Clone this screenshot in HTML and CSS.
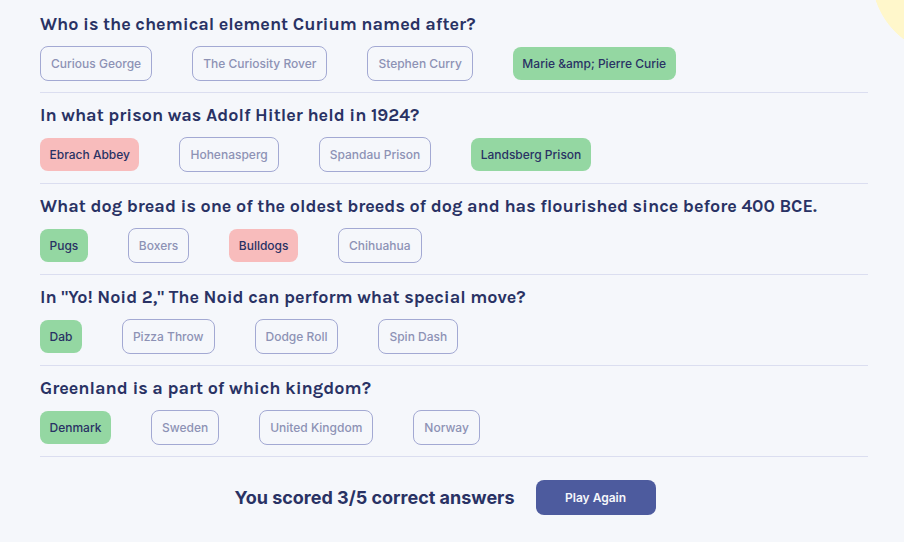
FILE: index.html
```html
<!DOCTYPE html>
<html>
<head>
<meta charset="utf-8">
<link rel="stylesheet" href="styles.css">
</head>
<body>
<main class="quiz">
  <section class="item">
    <h2 class="question">Who is the chemical element Curium named after?</h2>
    <div class="answers">
      <span class="answer">Curious George</span>
      <span class="answer">The Curiosity Rover</span>
      <span class="answer">Stephen Curry</span>
      <span class="answer correct">Marie &amp;amp; Pierre Curie</span>
    </div>
  </section>
  <section class="item">
    <h2 class="question">In what prison was Adolf Hitler held in 1924?</h2>
    <div class="answers">
      <span class="answer wrong">Ebrach Abbey</span>
      <span class="answer">Hohenasperg</span>
      <span class="answer">Spandau Prison</span>
      <span class="answer correct">Landsberg Prison</span>
    </div>
  </section>
  <section class="item">
    <h2 class="question">What dog bread is one of the oldest breeds of dog and has flourished since before 400 BCE.</h2>
    <div class="answers">
      <span class="answer correct">Pugs</span>
      <span class="answer">Boxers</span>
      <span class="answer wrong">Bulldogs</span>
      <span class="answer">Chihuahua</span>
    </div>
  </section>
  <section class="item">
    <h2 class="question">In "Yo! Noid 2," The Noid can perform what special move?</h2>
    <div class="answers">
      <span class="answer correct">Dab</span>
      <span class="answer">Pizza Throw</span>
      <span class="answer">Dodge Roll</span>
      <span class="answer">Spin Dash</span>
    </div>
  </section>
  <section class="item">
    <h2 class="question">Greenland is a part of which kingdom?</h2>
    <div class="answers">
      <span class="answer correct">Denmark</span>
      <span class="answer">Sweden</span>
      <span class="answer">United Kingdom</span>
      <span class="answer">Norway</span>
    </div>
  </section>
  <div class="result">
    <p class="score">You scored 3/5 correct answers</p>
    <button class="play">Play Again</button>
  </div>
</main>
</body>
</html>
```
FILE: styles.css
```css
html, body {
  margin: 0;
  padding: 0;
  background: #f5f7fb;
  overflow: hidden;
}
body {
  width: 904px;
  height: 542px;
  font-family: Inter, "Liberation Sans", sans-serif;
  color: #293264;
  background: radial-gradient(circle at 952px -25px, #fff7cb 80px, rgba(245, 247, 251, 0) 80.7px), #f5f7fb;
}
.quiz {
  margin: 0 36px 0 40px;
  padding-top: 2px;
}
.item {
  padding: 12px 0 11px;
  border-bottom: 1px solid #dbdef0;
}
.question {
  margin: 0 0 12px;
  font-family: Karla, Inter, sans-serif;
  font-size: 18px;
  line-height: 20px;
  font-weight: 700;
  color: #293264;
}
.answers {
  display: flex;
  align-items: center;
  gap: 40px;
  height: 35px;
}
.answer {
  font-size: 12px;
  line-height: 15px;
  font-weight: 500;
  padding: 9px 10px;
  border: 1px solid #a3a9d3;
  border-radius: 8px;
  color: #8d92b5;
}
.answer.correct,
.answer.wrong {
  border: none;
  padding: 9px 9.5px;
  color: #293264;
}
.answer.correct {
  background: #94d7a2;
}
.answer.wrong {
  background: #f8bcbc;
}
.result {
  display: flex;
  justify-content: center;
  align-items: center;
  gap: 21px;
  margin-top: 23px;
  padding-right: 18px;
}
.score {
  margin: 0;
  font-size: 18px;
  font-weight: 700;
  color: #293264;
}
.play {
  font-family: Inter, sans-serif;
  font-size: 12px;
  font-weight: 600;
  color: #f5f7fb;
  background: #4d5b9e;
  border: none;
  border-radius: 8px;
  width: 120px;
  height: 35px;
}
```
